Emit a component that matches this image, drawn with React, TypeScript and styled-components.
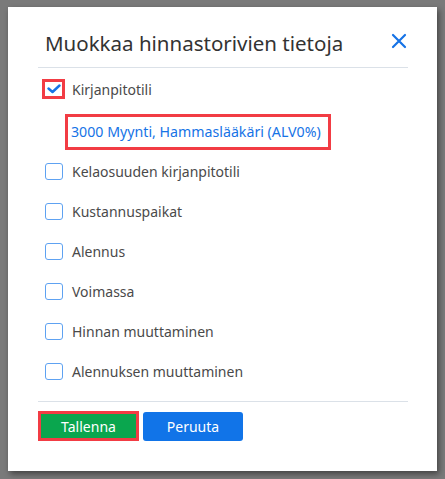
import * as React from "react";
import styled, {createGlobalStyle} from "styled-components";

const GlobalStyle = createGlobalStyle`
  html, body {
    margin: 0;
    padding: 0;
    background: #7a7a7a;
    font-family: "Noto Sans", "Open Sans", sans-serif;
  }
`;

const Backdrop = styled.div`
  width: 445px;
  height: 479px;
  padding: 7px 8px;
  box-sizing: border-box;
`;

const Dialog = styled.div`
  width: 429px;
  height: 464px;
  background: #fff;
  box-shadow: 2px 3px 6px rgba(0, 0, 0, 0.45);
  padding: 0 29px 0 30px;
  box-sizing: border-box;
  display: flex;
  flex-direction: column;
`;

const Header = styled.div`
  height: 60px;
  display: flex;
  align-items: center;
  justify-content: space-between;
  padding: 0 0 0 7px;
  border-bottom: 1px solid #dbe1e8;
`;

const Title = styled.h2`
  margin: 0;
  padding-top: 12px;
  font-size: 20.5px;
  font-weight: 400;
  color: #333;
`;

const CloseButton = styled.button`
  border: 0;
  background: none;
  padding: 0;
  margin: 8px 0 0 0;
  width: 18px;
  height: 18px;
  display: flex;
  align-items: center;
  justify-content: center;
  cursor: pointer;
`;

const List = styled.div`
  display: flex;
  flex-direction: column;
  padding: 1px 7px 10px;
  border-bottom: 1px solid #dbe1e8;
`;

const Row = styled.label`
  height: 40px;
  display: flex;
  align-items: center;
  gap: 9px;
  font-size: 14px;
  color: #4a4a4a;
`;

const Box = styled.span<{ $checked?: boolean }>`
  width: 18px;
  height: 17px;
  box-sizing: border-box;
  border: 1.5px solid #5ea2f2;
  border-radius: 3px;
  display: flex;
  align-items: center;
  justify-content: center;
  flex-shrink: 0;
  ${p => p.$checked && `
    width: 23px;
    height: 20px;
    margin-left: -3px;
    margin-right: -2px;
    border: 3px solid #f23c44;
    border-radius: 0;
  `}
`;

const AccountRow = styled.div`
  height: 42px;
  display: flex;
  align-items: flex-start;
  padding-left: 20px;
`;

const AccountLink = styled.a`
  margin-top: 5px;
  border: 3px solid #f23c44;
  padding: 5px 7px 5px 3px;
  font-size: 14.2px;
  color: #1673e6;
  text-decoration: none;
  line-height: 20px;
`;

const Footer = styled.div`
  display: flex;
  gap: 4px;
  padding-top: 9px;
`;

const Button = styled.button<{ $variant: "save" | "cancel" }>`
  font-family: inherit;
  font-size: 14px;
  color: #fff;
  width: 100px;
  height: 30px;
  box-sizing: border-box;
  cursor: pointer;
  ${p => p.$variant === "save" ? `
    width: 101px;
    background: #0aa64e;
    border: 3px solid #f23c44;
    border-radius: 0;
  ` : `
    margin-top: 1px;
    height: 29px;
    background: #1174e8;
    border: 0;
    border-radius: 3px;
  `}
`;

const options = [
    "Kelaosuuden kirjanpitotili",
    "Kustannuspaikat",
    "Alennus",
    "Voimassa",
    "Hinnan muuttaminen",
    "Alennuksen muuttaminen"
];

const App = () =>
    <Backdrop>
        <GlobalStyle/>
        <Dialog>
            <Header>
                <Title>Muokkaa hinnastorivien tietoja</Title>
                <CloseButton aria-label="Sulje">
                    <svg width="16" height="16" viewBox="0 0 16 16">
                        <path d="M2 2 L14 14 M14 2 L2 14" stroke="#1673e6" strokeWidth="2.2" strokeLinecap="round"/>
                    </svg>
                </CloseButton>
            </Header>
            <List>
                <Row>
                    <Box $checked>
                        <svg width="14" height="10" viewBox="0 0 14 10">
                            <path d="M1.5 4.5 L5.5 8 L12.5 1.5" stroke="#1673e6" strokeWidth="2.4" fill="none"
                                  strokeLinecap="round" strokeLinejoin="round"/>
                        </svg>
                    </Box>
                    Kirjanpitotili
                </Row>
                <AccountRow>
                    <AccountLink href="#">3000 Myynti, Hammaslääkäri (ALV0%)</AccountLink>
                </AccountRow>
                {options.map(option =>
                    <Row key={option}>
                        <Box/>
                        {option}
                    </Row>
                )}
            </List>
            <Footer>
                <Button $variant="save">Tallenna</Button>
                <Button $variant="cancel">Peruuta</Button>
            </Footer>
        </Dialog>
    </Backdrop>;

export default App;
